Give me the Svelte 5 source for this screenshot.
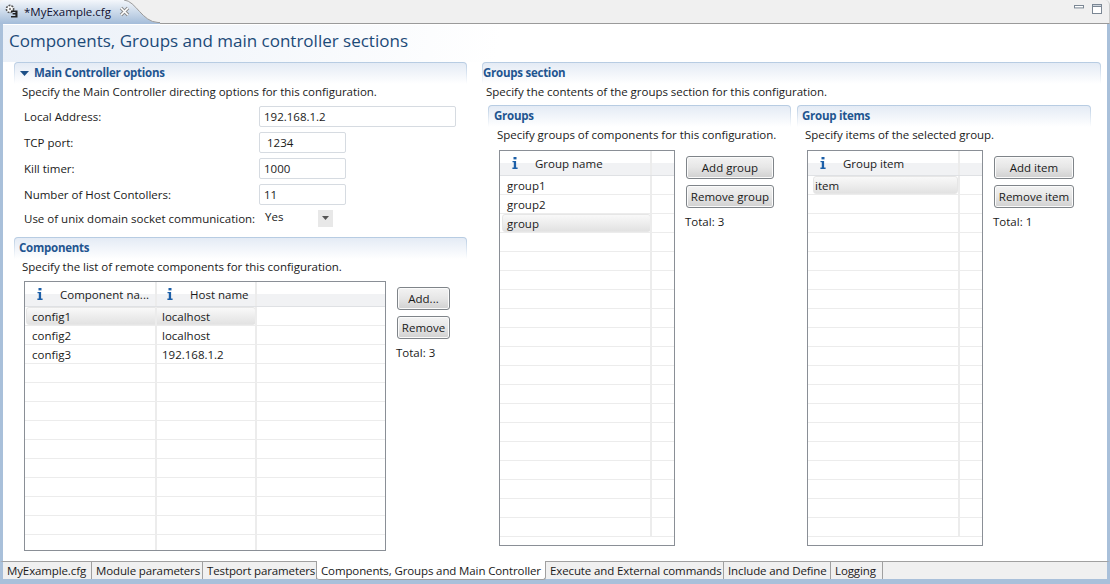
<script>
  const tabs = [
    ['MyExample.cfg', 89],
    ['Module parameters', 111],
    ['Testport parameters', 114],
    ['Components, Groups and Main Controller', 229],
    ['Execute and External commands', 178],
    ['Include and Define', 107],
    ['Logging', 52]
  ];
  const formRows = [
    ['Local Address:', '192.168.1.2', 'wide'],
    ['TCP port:', ' 1234', ''],
    ['Kill timer:', '1000', ''],
    ['Number of Host Contollers:', '11', '']
  ];
  const compRows = [
    ['config1', 'localhost'],
    ['config2', 'localhost'],
    ['config3', '192.168.1.2']
  ];
</script>

{#snippet info()}
  <svg class="info" width="6" height="12" viewBox="0 0 6 12">
    <rect x="1.5" y="0" width="3" height="2.4" fill="#1c5fa8" />
    <path d="M0.5 4h3.6v6.6H5.6V12H0.4v-1.4h1.4V5.3H0.5z" fill="#1c5fa8" />
  </svg>
{/snippet}

{#snippet table(cols, rows, count, sel, selX, selW, cls)}
  <div class="table {cls}">
    <div class="thead">
      {#each cols as c}
        <div class="th" style="width:{c.w}px">
          {#if c.name}{@render info()}<span>{c.name}</span>{/if}
        </div>
      {/each}
    </div>
    {#each Array(count) as _, r}
      <div class="tr">
        {#if r === sel}<div class="selbar" style="left:{selX}px;width:{selW}px"></div>{/if}
        {#each cols as c, i}
          <div class="td" style="width:{c.w}px">{rows[r]?.[i] ?? ''}</div>
        {/each}
      </div>
    {/each}
  </div>
{/snippet}

{#snippet sideButtons(a, b, total, w)}
  <div class="side" style="width:{w}px">
    <button>{a}</button>
    <button>{b}</button>
    <div class="total">Total: {total}</div>
  </div>
{/snippet}

<div class="window">
  <div class="topstrip">
    <div class="edtab">
      <svg class="edicon" width="17" height="17" viewBox="0 0 17 17">
        <circle cx="7" cy="6" r="3.6" fill="#fff" stroke="#555" stroke-width="1.6" stroke-dasharray="2 1" />
        <circle cx="7" cy="6" r="1.2" fill="#888" />
        <path d="M8 7.5h6.5v7H8v-1.6h4.4v-1.3H9.6V9.9h2.8V9H8z" fill="#222" />
      </svg>
      <span class="edname">*MyExample.cfg</span>
      <svg class="close" width="11" height="11" viewBox="0 0 11 11">
        <path d="M2 2l7 7M9 2l-7 7" stroke="#8a8a8a" stroke-width="3.4" />
        <path d="M2 2l7 7M9 2l-7 7" stroke="#fff" stroke-width="1.6" />
      </svg>
      <svg class="edcurve" width="36" height="24" viewBox="0 0 36 24">
        <path d="M0 0C12 1 18 22 34 22.5H36V0z" fill="#f0f0f0" />
        <path d="M0 0C12 1 18 22 34 22.5H36" fill="none" stroke="#9a9a9a" />
      </svg>
    </div>
    <div class="strip-fill">
      <svg width="12" height="5" viewBox="0 0 12 5"><rect x="1.5" y="1.5" width="9" height="2.4" fill="#fff" stroke="#7b8794" /></svg>
      <svg width="12" height="11" viewBox="0 0 12 11"><rect x="1.5" y="1.5" width="9" height="9" fill="#fff" stroke="#7b8794" /><rect x="1.5" y="1.5" width="9" height="2" fill="#cfd6de" stroke="#7b8794" /></svg>
    </div>
  </div>

  <div class="frame">
    <h1>Components, Groups and main controller sections</h1>
    <div class="columns">
      <div class="left">
        <section>
          <div class="sechead">
            <svg width="9" height="5" viewBox="0 0 9 5"><path d="M0 0h9L4.5 5z" fill="#1c4f86" /></svg>
            Main Controller options
          </div>
          <p class="desc">Specify the Main Controller directing options for this configuration.</p>
          <div class="form">
            {#each formRows as [label, value, size]}
              <div class="formrow">
                <label for={label}>{label}</label>
                <input id={label} class={size} {value} />
              </div>
            {/each}
            <div class="formrow combo">
              <span class="lbl">Use of unix domain socket communication:</span>
              <span class="yes">Yes</span>
              <span class="arrow"><svg width="7" height="4" viewBox="0 0 7 4"><path d="M0 0h7L3.5 4z" fill="#555" /></svg></span>
            </div>
          </div>
        </section>
        <section class="comps">
          <div class="sechead">Components</div>
          <p class="desc">Specify the list of remote components for this configuration.</p>
          <div class="tablewrap">
            {@render table([{ name: 'Component na...', w: 132 }, { name: 'Host name', w: 100 }, { name: '', w: 128 }], compRows, 13, 0, 1, 230, 'tleft')}
            {@render sideButtons('Add...', 'Remove', 3, 53)}
          </div>
        </section>
      </div>

      <div class="right">
        <div class="sechead">Groups section</div>
        <p class="desc">Specify the contents of the groups section for this configuration.</p>
        <div class="subcols">
          <section class="sub groups">
            <div class="sechead">Groups</div>
            <p class="desc">Specify groups of components for this configuration.</p>
            <div class="tablewrap">
              {@render table([{ name: 'Group name', w: 152 }, { name: '', w: 22 }], [['group1'], ['group2'], ['group']], 19, 2, 2, 149, 'ttall')}
              {@render sideButtons('Add group', 'Remove group', 3, 88)}
            </div>
          </section>
          <section class="sub items">
            <div class="sechead">Group items</div>
            <p class="desc">Specify items of the selected group.</p>
            <div class="tablewrap">
              {@render table([{ name: 'Group item', w: 152 }, { name: '', w: 22 }], [['item']], 19, 0, 5, 145, 'ttall')}
              {@render sideButtons('Add item', 'Remove item', 1, 80)}
            </div>
          </section>
        </div>
      </div>
    </div>
  </div>

  <div class="bottomtabs">
    {#each tabs as [t, w], i}
      <div class="btab" class:active={i === 3} style="width:{w}px">{t}</div>
    {/each}
  </div>
</div>

<style>
  :global(body) {
    margin: 0;
    background: #fff;
  }

  .window {
    width: 1110px;
    height: 584px;
    overflow: hidden;
    display: flex;
    flex-direction: column;
    font-family: 'Open Sans', 'Noto Sans', sans-serif;
    font-size: 11.5px;
    color: #1a1a1a;
    background: #f0f0f0;
  }

  /* top editor tab */
  .topstrip {
    height: 24px;
    display: flex;
    flex: none;
  }

  .edtab {
    position: relative;
    width: 160px;
    flex: none;
    display: flex;
    align-items: center;
    padding: 0 0 2px 3px;
    box-sizing: border-box;
    background: linear-gradient(#f4f7fb, #a3bcd9);
    border-radius: 4px 0 0 0;
  }

  .edicon,
  .close {
    flex: none;
  }

  .edname {
    font-size: 11.5px;
    margin: 0 8px 0 4px;
    color: #101030;
    white-space: nowrap;
  }

  .edcurve {
    position: absolute;
    right: 0;
    top: 0;
  }

  .strip-fill {
    flex: 1;
    display: flex;
    justify-content: flex-end;
    align-items: flex-start;
    gap: 6px;
    padding: 3px 6px 0 0;
    background: #f0f0f0;
    border-bottom: 1px solid #9a9a9a;
    border-right: 1px solid #ccc;
    border-radius: 0 5px 0 0;
    box-sizing: border-box;
  }

  .strip-fill svg:first-child {
    margin-top: 1px;
  }

  /* editor body */
  .frame {
    flex: 1;
    min-height: 0;
    background: #fff;
    border-left: 3px solid #a9c0da;
    border-right: 3px solid #a9c0da;
    padding-top: 1px;
  }

  h1 {
    margin: 0;
    height: 37px;
    box-sizing: border-box;
    padding: 4px 0 0 6px;
    font-size: 17px;
    font-weight: 400;
    color: #1c4a78;
    background: linear-gradient(100deg, #eaf0f8, #fff 45%);
    white-space: nowrap;
  }

  .columns {
    display: flex;
    padding-left: 11px;
  }

  .left {
    width: 453px;
    flex: none;
  }

  .right {
    width: 619px;
    margin-left: 15px;
    flex: none;
  }

  .sechead {
    height: 22px;
    box-sizing: border-box;
    padding: 2px 0 0 5px;
    border: 1px solid transparent;
    border-bottom: 0;
    border-radius: 4px 4px 0 0;
    background:
      linear-gradient(#e4ebf5, #fff) padding-box,
      linear-gradient(#b6cbe2, #fff) border-box;
    color: #1f5590;
    font-weight: 700;
    font-size: 11.5px;
    letter-spacing: -0.25px;
    display: flex;
    align-items: flex-start;
    gap: 5px;
  }

  .sechead svg {
    margin-top: 6px;
  }

  .comps > .sechead {
    padding-left: 4px;
  }

  .right > .sechead {
    padding-left: 0;
  }

  .items > .sechead {
    padding-left: 4px;
  }

  .desc {
    margin: 0;
    height: 17px;
    padding: 0 0 0 8px;
    white-space: nowrap;
    line-height: 16px;
    letter-spacing: -0.03px;
  }

  .right > .desc {
    padding-left: 4px;
  }

  .form {
    padding: 2px 0 0 10px;
  }

  .formrow {
    display: flex;
    align-items: center;
    height: 26px;
  }

  .formrow label,
  .lbl {
    width: 235px;
    flex: none;
    white-space: nowrap;
  }

  input {
    width: 87px;
    height: 21px;
    box-sizing: border-box;
    border: 1px solid #d6dbe1;
    border-radius: 2px;
    padding: 0 4px;
    font: inherit;
    color: #1a1a1a;
    background: #fff;
  }

  input.wide {
    width: 197px;
  }

  .combo {
    height: 22px;
  }

  .yes {
    margin: -3px 0 0 6px;
    width: 53px;
  }

  .arrow {
    width: 15px;
    height: 17px;
    background: #e8e8e8;
    display: flex;
    align-items: center;
    justify-content: center;
  }

  .comps {
    margin-top: 8px;
  }

  .tablewrap {
    display: flex;
    padding: 6px 0 0 10px;
    gap: 11px;
  }

  .comps .tablewrap {
    padding-top: 5px;
  }

  .table {
    width: 362px;
    height: 270px;
    box-sizing: border-box;
    border: 1px solid #8a8f96;
    overflow: hidden;
    flex: none;
  }

  .table.ttall {
    width: 176px;
    height: 396px;
  }

  .thead {
    display: flex;
    height: 25px;
    box-sizing: border-box;
    border-bottom: 1px solid #dfe1e4;
    background: linear-gradient(#fff 50%, #f1f2f4 50%);
  }

  .th {
    display: flex;
    align-items: center;
    box-sizing: border-box;
    padding-left: 12px;
    gap: 17px;
    border-right: 2px solid #ececec;
    white-space: nowrap;
    flex: none;
  }

  .th + .th {
    padding-left: 10px;
  }

  .th:last-child,
  .td:last-child {
    border-right: 0;
  }

  .info {
    flex: none;
  }

  .tr {
    position: relative;
    display: flex;
    height: 19px;
    box-sizing: border-box;
    border-bottom: 1px solid #ececec;
  }

  .td {
    position: relative;
    box-sizing: border-box;
    padding-left: 7px;
    line-height: 20px;
    border-right: 2px solid #ececec;
    flex: none;
    white-space: nowrap;
  }

  .td + .td {
    padding-left: 5px;
  }

  .selbar {
    position: absolute;
    top: 0;
    height: 18px;
    box-sizing: border-box;
    border: 1px solid #e6e6e6;
    border-radius: 3px;
    background: linear-gradient(#f9f9f9, #e2e2e2);
  }

  .side {
    padding-top: 6px;
    flex: none;
    display: flex;
    flex-direction: column;
    align-items: stretch;
    gap: 6px;
  }

  button {
    height: 23px;
    padding: 0;
    box-sizing: border-box;
    border: 1px solid #7f8489;
    border-radius: 3px;
    background: linear-gradient(#f3f3f3, #e6e6e6 50%, #d0d0d0);
    box-shadow: inset 0 0 0 1px #fbfbfb;
    font: inherit;
    color: #1a1a1a;
    white-space: nowrap;
  }

  .total {
    margin: 0 0 0 -1px;
    white-space: nowrap;
  }

  .subcols {
    display: flex;
    padding-left: 6px;
    gap: 6px;
    margin-top: 4px;
  }

  .groups {
    width: 303px;
  }

  .groups .tablewrap {
    padding-left: 11px;
  }

  .items {
    width: 294px;
  }

  .groups .desc {
    padding-left: 9px;
  }

  /* bottom page tabs */
  .bottomtabs {
    flex: none;
    height: 23px;
    box-sizing: border-box;
    display: flex;
    background: #f0f0f0;
    border-left: 3px solid #a9c0da;
    border-right: 3px solid #a9c0da;
    border-bottom: 5px solid #a9c0da;
    border-top: 1px solid #a0a0a0;
  }

  .btab {
    box-sizing: border-box;
    flex: none;
    padding-left: 4px;
    line-height: 17px;
    letter-spacing: -0.12px;
    border-right: 1px solid #a0a0a0;
    white-space: nowrap;
    overflow: hidden;
  }

  .btab.active {
    background: #fff;
    margin-top: -1px;
    height: 19px;
    line-height: 19px;
    border-bottom: 1px solid #a0a0a0;
    border-radius: 0 0 3px 3px;
  }
</style>
